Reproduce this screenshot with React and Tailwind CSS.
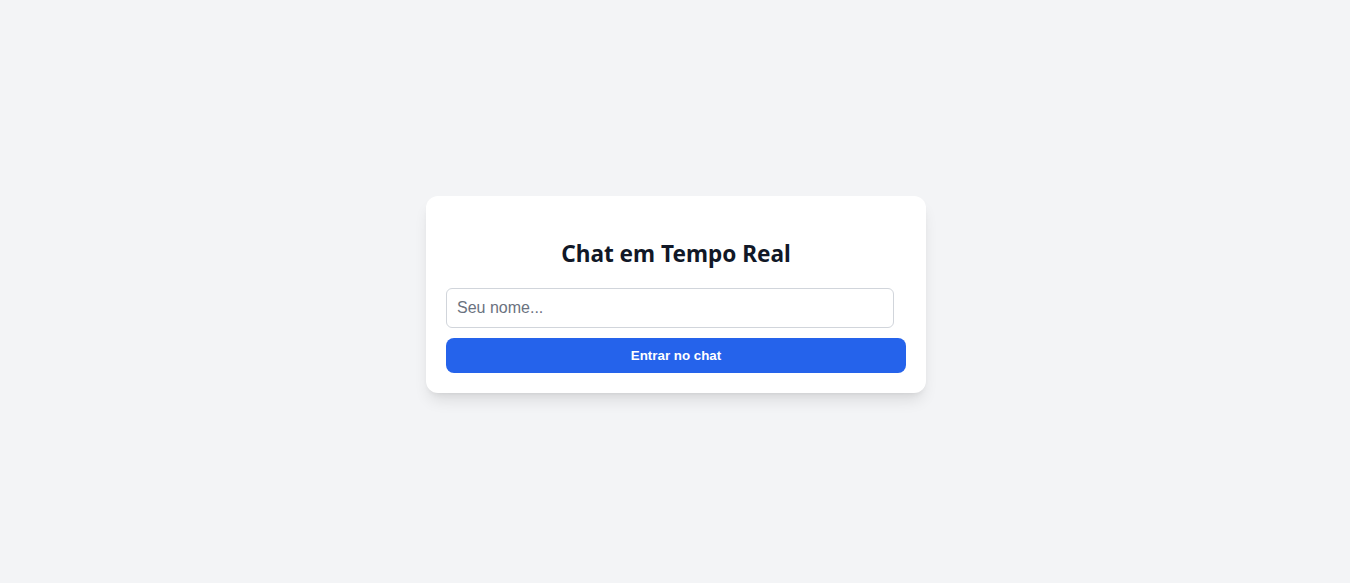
import React, { useState } from 'react';

export default function App() {
  const [name, setName] = useState('');

  return (
    <div className="min-h-screen bg-[#f3f4f6] flex items-center justify-center pt-[6px] pl-[2px]">
      <div className="w-[500px] bg-white rounded-xl shadow-lg px-5 pt-[42px] pb-5">
        <h1 className="text-center text-[22.6px] leading-8 font-bold text-[#111827] mb-[18px] font-['Noto_Sans',sans-serif]">
          Chat em Tempo Real
        </h1>
        <input
          type="text"
          value={name}
          onChange={e => setName(e.target.value)}
          placeholder="Seu nome..."
          className="block w-[448px] h-10 px-2.5 border border-[#d1d5db] rounded-md text-base text-gray-800 placeholder:text-[#6b7280] font-['Liberation_Sans',Arial,sans-serif] focus:outline-none"
        />
        <button className="mt-2.5 w-full h-[35px] bg-[#2563eb] text-white text-[13.33px] font-bold rounded-lg font-['Liberation_Sans',Arial,sans-serif]">
          Entrar no chat
        </button>
      </div>
    </div>
  );
}
